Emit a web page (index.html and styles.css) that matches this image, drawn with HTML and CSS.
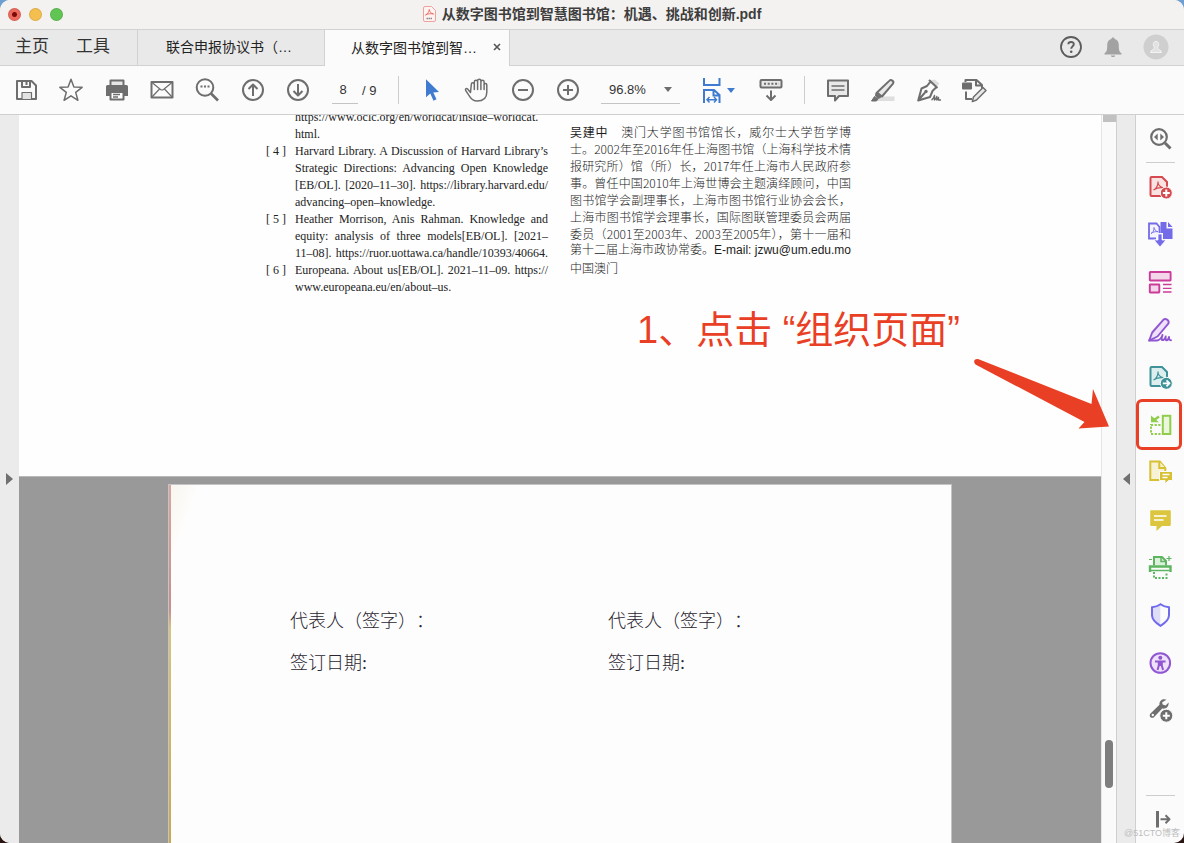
FILE: index.html
```html
<!DOCTYPE html>
<html lang="zh-CN">
<head>
<meta charset="utf-8">
<title>从数字图书馆到智慧图书馆：机遇、挑战和创新.pdf</title>
<link rel="stylesheet" href="styles.css">
</head>
<body>
<div class="window">
  <header class="titlebar">
    <div class="lights">
      <button class="light close" aria-label="关闭"></button>
      <button class="light min" aria-label="最小化"></button>
      <button class="light max" aria-label="缩放"></button>
    </div>
    <h1 class="title">
      <svg class="pdf-icon" viewBox="0 0 13 16"><path d="M2 .5h6.500l4 4V14a1.500 1.500 0 0 1-1.500 1.500H2A1.500 1.500 0 0 1 .5 14V2A1.500 1.500 0 0 1 2 .5z" fill="#fff3f1" stroke="#eda29c"/><path d="M2.500 9c2-.8 3.500-3 3.800-5.500.3 2.500 2 4.300 4.200 4.500C8 7.400 5 7.700 2.500 9z" fill="none" stroke="#e5675e" stroke-width=".9"/><path d="M3.500 12.500h6" stroke="#888" stroke-width="1.600" stroke-dasharray="1.500 .5"/></svg>
      <span>从数字图书馆到智慧图书馆：机遇、挑战和创新.pdf</span>
    </h1>
  </header>

  <nav class="tabbar">
    <div class="menus"><button class="menu">主页</button><button class="menu">工具</button></div>
    <button class="tab">联合申报协议书（…</button>
    <div class="tab active"><button class="tab-name">从数字图书馆到智…</button><button class="tab-close" aria-label="关闭标签页"><svg viewBox="0 0 8 8"><path d="M1 1l6 6M7 1L1 7" stroke="#555" stroke-width="1.600"/></svg></button></div>
    <div class="account">
      <button aria-label="帮助"><svg class="icon" viewBox="0 0 24 24"><circle cx="12" cy="12" r="10" fill="none" stroke="#5c5c5c" stroke-width="1.800"/><path d="M9.300 9.300c.2-3.200 5.600-3 5.500 0 0 2-2.600 2.200-2.600 4.500" fill="none" stroke="#5c5c5c" stroke-width="1.900"/><circle cx="12.200" cy="16.800" r="1.300" fill="#5c5c5c"/></svg></button>
      <button aria-label="通知"><svg class="icon" viewBox="0 0 24 24"><path d="M12 2.500c1 0 1.600.7 1.600 1.600 2.700.8 4.200 2.900 4.200 5.800 0 5.600.6 6.900 2.700 8.300v1.200h-17v-1.200c2.100-1.400 2.700-2.700 2.700-8.300 0-2.900 1.500-5 4.200-5.800 0-.9.600-1.600 1.600-1.600zM9.800 20.500h4.400c-.4 2-4 2-4.400 0z" fill="#a2a2a2"/></svg></button>
      <button aria-label="个人资料"><svg class="avatar" viewBox="0 0 26 26"><circle cx="13" cy="13" r="12.500" fill="#cfcfcf"/><path d="M13 7.500c2 0 3 1.400 2.700 3.300-.2 1.500-1.200 2-1.200 3.300 0 1.600 3.800 1.300 4 4.400H7.500c.2-3.100 4-2.800 4-4.400 0-1.300-1-1.800-1.200-3.300-.3-1.900.7-3.300 2.700-3.300z" fill="#e2e2e2" stroke="#f3f3f3"/></svg></button>
    </div>
  </nav>

  <div class="toolbar">
    <div class="tools seven">
      <button aria-label="保存"><svg class="icon line" viewBox="0 0 24 24"><path d="M3 3h14.500l4.500 4.500V21H3z"/><path d="M8 3v6h8V3M12.500 4v3" /><path d="M8 21v-6.500h9.500V21" fill="#e2e2e2" stroke-width="1.200"/></svg></button>
      <button aria-label="收藏"><svg class="icon line thin" viewBox="0 0 24 24"><path d="M12 1.200l2.900 7.700 8.200.4-6.400 5.100 2.200 7.900L12 17.800l-6.900 4.500 2.200-7.900L.9 9.300l8.200-.4z"/></svg></button>
      <button aria-label="打印"><svg class="icon line" viewBox="0 0 24 24"><path d="M5.500 7V2.500h13V7" fill="#e6e6e6"/><path d="M1 8.500q0-1.500 1.500-1.500h19q1.500 0 1.500 1.500V18h-5v-4H6v4H1z" fill="#6e6e6e" stroke="none"/><path d="M5.500 14h13v7.500h-13z" fill="#fff"/><path d="M8 16.500h7M8 19h5" stroke-width="1.300"/></svg></button>
      <button aria-label="电子邮件"><svg class="icon line" viewBox="0 0 24 24"><path d="M1.500 4h21v15.500h-21z"/><path d="M2 4.500l8.500 7q1.500 1 3 0l8.500-7M2 19l7.500-8M22 19l-7.500-8" stroke-width="1.200"/></svg></button>
      <button aria-label="查找"><svg class="icon line" viewBox="0 0 24 24"><circle cx="10" cy="9.500" r="8.300"/><path d="M16 15.500l7 7" stroke-width="2.600"/><path d="M5.500 8.500h2M9 8.500h2M12.500 8.500h2" stroke-width="2"/></svg></button>
      <button aria-label="上一页"><svg class="icon line" viewBox="0 0 24 24"><circle cx="12" cy="12" r="10"/><path d="M12 18V7M7.500 11L12 6.500l4.500 4.500"/></svg></button>
      <button aria-label="下一页"><svg class="icon line" viewBox="0 0 24 24"><circle cx="12" cy="12" r="10"/><path d="M12 6v11M7.500 13l4.500 4.500 4.500-4.500"/></svg></button>
    </div>
    <div class="pager"><input class="page-no" value="8" aria-label="页码"><span>/ 9</span></div>
    <span class="divider"></span>
    <div class="tools four">
      <button aria-label="选择"><svg class="icon" viewBox="0 0 24 24"><path d="M6 1.300v18l4.300-3.800 3.200 7.200 3-1.400-3.200-6.800 5.700-.6z" fill="#3f7bd0"/></svg></button>
      <button aria-label="抓手"><svg class="icon line thin" viewBox="0 0 24 24"><path d="M5.500 14.500L2.600 11C1.200 9.700-.3 11.300.9 12.800l3.900 5.800c1.700 2.800 3.800 4.400 7.200 4.400 6 0 9.800-3 9.800-8.800V7c0-2-2.700-2-2.700 0v4.500V4c0-2.200-3.200-2.200-3.200 0v7.500V2.800c0-2.200-3.300-2.200-3.300 0v8.700V4c0-2.200-3.300-2.200-3.300 0v7.500V6.500c0-2.200-3-2.200-3 0z" /></svg></button>
      <button aria-label="缩小"><svg class="icon line" viewBox="0 0 24 24"><circle cx="12" cy="12" r="10"/><path d="M7 12h10"/></svg></button>
      <button aria-label="放大"><svg class="icon line" viewBox="0 0 24 24"><circle cx="12" cy="12" r="10"/><path d="M7 12h10M12 7v10"/></svg></button>
    </div>
    <div class="zoom">
      <select aria-label="缩放比例"><option>96.8%</option></select>
      <svg class="caret" viewBox="0 0 8 5"><path d="M0 0h8L4 5z" fill="#6e6e6e"/></svg>
    </div>
    <button class="fit" aria-label="适合宽度">
      <svg class="icon fit-icon" viewBox="0 0 24 26" fill="none" stroke="#3f7bd0" stroke-width="2"><path d="M4 1v7h15.500V1"/><path d="M4 26V13h10l5.500 5V26M13.500 13v5.500h6" /><path d="M7 22.700h9.500M9.500 20L7 22.700l2.500 2.700M14 20l2.500 2.700-2.500 2.700" stroke-width="1.500"/></svg>
      <svg class="caret" viewBox="0 0 8 5"><path d="M0 0h8L4 5z" fill="#3f7bd0"/></svg>
    </button>
    <button class="keys" aria-label="隐藏工具栏"><svg class="icon line" viewBox="0 0 24 24"><rect x="1.500" y="2" width="21" height="7.500" rx="1" fill="#e8e8e8"/><path d="M5 5.700h15" stroke-dasharray="2 1.700"/><path d="M12 12.500v9M7.500 17.500l4.500 4.500 4.500-4.500"/></svg></button>
    <span class="divider"></span>
    <div class="tools four">
      <button aria-label="注释"><svg class="icon line" viewBox="0 0 24 24"><path d="M2 2.500h20v15.500h-9L9 22.500V18H2z" fill="#e8e8e8"/><path d="M5.500 8h13M5.500 12h13" stroke-width="1.300"/></svg></button>
      <button aria-label="高亮"><svg class="icon line" viewBox="0 0 24 24"><path d="M8 18.500h15.500V23H6z" fill="#dedede" stroke="none"/><path d="M6 14.500L18.500 2.600c1.500-1.500 5 .7 3.500 3L11 18.500z" fill="#e8e8e8"/><path d="M5 14.500l5 4.500-2.500 1.500-3-2.500zM3.500 18.500L7 21l-1.500 2H.5z" fill="#6e6e6e" stroke-width="1"/></svg></button>
      <button aria-label="签名"><svg class="icon line" viewBox="0 0 24 24"><path d="M13 2.500l6.500 6.500 3-3.500-5-4z" fill="#dedede" stroke="none"/><path d="M12 2l8.500 8M13.300 3.800L10 8 4.500 10.500 1.200 22.500 13 19l2.500-6 3.500-3.500M1.500 22l6.500-7.500"/><circle cx="9" cy="13.500" r="1.700" fill="#6e6e6e" stroke="none"/><path d="M14.500 22q2-1 3-4.500v4.500q1.500-.5 2.300-3.500v3.500q1-.5 1.700-2.500v2.500H24" stroke-width="1.400"/></svg></button>
      <button aria-label="编辑"><svg class="icon line" viewBox="0 0 24 24"><path d="M3.500 4V2h11L20 7v3.500M14 2v5.500h5.500"/><rect x="0" y="4.500" width="10" height="7" rx="1" fill="#6e6e6e" stroke="none"/><path d="M4 13.500V21h6"/><path d="M11.500 19L21 9.500l3 3-9.500 9.500-4.200 1.600z" fill="#e8e8e8" stroke-width="1.500"/></svg></button>
    </div>
  </div>

  <div class="body">
    <button class="left-strip" aria-label="展开导览窗格"><svg viewBox="0 0 7 12"><path d="M0 0l7 6-7 6z" fill="#707070"/></svg></button>
    <main class="document">
      <section class="page page-first">
        <div class="columns">
          <div class="refs">
            <span></span>
            <p><span>https://www.oclc.org/en/worldcat/inside–worldcat.</span><span class="end">html.</span></p>
            <span class="num">[ 4 ]</span>
            <p><span>Harvard Library. A Discussion of Harvard Library’s</span><span>Strategic Directions: Advancing Open Knowledge</span><span>[EB/OL]. [2020–11–30]. https://library.harvard.edu/</span><span class="end">advancing–open–knowledge.</span></p>
            <span class="num">[ 5 ]</span>
            <p><span>Heather Morrison, Anis Rahman. Knowledge and</span><span>equity: analysis of three models[EB/OL]. [2021–</span><span>11–08]. https://ruor.uottawa.ca/handle/10393/40664.</span></p>
            <span class="num">[ 6 ]</span>
            <p><span>Europeana. About us[EB/OL]. 2021–11–09. https://</span><span class="end">www.europeana.eu/en/about–us.</span></p>
          </div>
          <p class="bio"><span><b>吴建中</b>　澳门大学图书馆馆长，威尔士大学哲学博</span><span>士。2002年至2016年任上海图书馆（上海科学技术情</span><span>报研究所）馆（所）长，2017年任上海市人民政府参</span><span>事。曾任中国2010年上海世博会主题演绎顾问，中国</span><span>图书馆学会副理事长，上海市图书馆行业协会会长，</span><span>上海市图书馆学会理事长，国际图联管理委员会两届</span><span>委员（2001至2003年、2003至2005年），第十一届和</span><span class="mail">第十二届上海市政协常委。E-mail: jzwu@um.edu.mo</span><span class="end">中国澳门</span></p>
        </div>
      </section>
      <section class="page page-scan">
        <div class="sign"><p>代表人（签字）：</p><p>签订日期:</p></div>
        <div class="sign"><p>代表人（签字）：</p><p>签订日期:</p></div>
      </section>
    </main>
    <div class="scroll"><span class="scroll-top"></span><span class="thumb"></span></div>
    <button class="right-strip" aria-label="折叠工具窗格"><svg viewBox="0 0 7 12"><path d="M7 0L0 6l7 6z" fill="#707070"/></svg></button>
    <aside class="rail">
      <button aria-label="搜索工具"><svg class="icon line" viewBox="0 0 24 24"><circle cx="11" cy="10" r="7.800" stroke-width="2.200"/><path d="M17 16l5.500 5.500" stroke-width="3"/><path d="M9.700 6.500v7L6 10zM12.300 6.500v7L16 10z" fill="#6e6e6e" stroke="none"/></svg></button>
      <hr>
      <div class="rail-tools">
        <button aria-label="创建 PDF"><svg class="icon" viewBox="0 0 24 24" fill="none" stroke="#d6494f" stroke-width="2"><path d="M3.500 2h10.500l5 5v14H3.500q-1 0-1-1V3q0-1 1-1z" fill="#f9e2e2"/><path d="M5.500 15c3-1.500 4.500-5 4.500-8.500 0 3 2 5.500 5.500 6.300-4-.5-7 .2-10 2.200z" stroke-width="1.100"/><circle cx="18.300" cy="18" r="6" fill="#d6494f" stroke="#fafafa" stroke-width="1"/><path d="M14.800 18h7M18.300 14.500v7" stroke="#fff"/></svg></button>
        <button aria-label="合并文件"><svg class="icon" viewBox="0 0 24 24" fill="none" stroke="#736be8" stroke-width="1.800"><path d="M8 16.500H1V1.500h7.500l3 3.500v6" fill="#f5f4fd"/><path d="M3 11.500c2-1 3-3 3-6 .3 2 1.500 3.600 4 4.200-3-.3-5 .3-7 1.800z" stroke-width=".9"/><path d="M12.500 0h6v6.500h6V17H15v-6h-2.500zM20 0l4.500 5H20z" fill="#736be8" stroke="none"/><path d="M10 12h4v6h4l-6 7-6-7h4z" fill="#736be8" stroke="#fafafa" stroke-width=".8"/></svg></button>
        <button aria-label="编辑 PDF"><svg class="icon" viewBox="0 0 24 24" fill="#f3d6e9" stroke="#cb3b99" stroke-width="1.900"><rect x="1.800" y="2" width="20.800" height="8.500" rx=".5"/><rect x="1.800" y="14.500" width="9.500" height="8" rx=".5"/><path d="M15 14.500h8.500M15 18.300h8.500M15 22h8.500" stroke-width="1.300"/></svg></button>
        <button aria-label="填写和签名"><svg class="icon" viewBox="0 0 24 24" fill="none" stroke="#9157d2" stroke-width="1.900" stroke-linejoin="round" stroke-linecap="round"><path d="M1.200 22.500l3-8L15.500 1.600q1.800-1.400 3.800.2T20.500 5.300L9.500 18.500z" fill="#eee1f9"/><path d="M1.200 22.500h8q4-1 5.300-5.500-1.300 3.500-.5 5 2.200.8 3.700-3.500-.4 4 1 3.800 1.800-.3 2.300-3.300-.1 3.500 2 3.200"/></svg></button>
        <button aria-label="导出 PDF"><svg class="icon" viewBox="0 0 24 24" fill="none" stroke="#3f9299" stroke-width="2"><path d="M3.500 2h10.500l5 5v14H3.500q-1 0-1-1V3q0-1 1-1z" fill="#dceeee"/><path d="M5.500 15c3-1.500 4.500-5 4.500-8.500 0 3 2 5.500 5.500 6.300-4-.5-7 .2-10 2.200z" stroke-width="1.100"/><circle cx="18.300" cy="18.300" r="6" fill="#3f9299" stroke="#fafafa" stroke-width="1"/><path d="M14.800 18.300h6.500M18.500 15.300l3 3-3 3" stroke="#fff" stroke-width="1.700"/></svg></button>
        <button aria-label="组织页面" class="marked"><svg class="icon" viewBox="0 0 24 24" fill="none" stroke="#8fcd4b" stroke-width="2"><rect x="14.800" y="2.800" width="7.500" height="18.200" fill="#eaf7dc"/><path d="M12.500 12H3v9h9.500" stroke-dasharray="2.200 1.500"/><path d="M11 3.500L5.500 7.500" stroke-width="2.400"/><path d="M3 2.500v6.700h8z" fill="#8fcd4b" stroke="none"/></svg></button>
        <button aria-label="发送以供注释"><svg class="icon" viewBox="0 0 24 24" fill="#f7f2d4" stroke="#d8c033" stroke-width="2"><path d="M2.300 1.500h9.500l5.500 6.500v12h-15z"/><path d="M11.300 1.500V8h6"/><path d="M11.500 11.500h13v9h-4L17 24v-3.500h-5.500z" fill="#d8c033" stroke="#fafafa" stroke-width="1"/><path d="M14.500 14.500h7M14.500 17.500h5" stroke="#fff" stroke-width="1.300"/></svg></button>
        <button aria-label="注释"><svg class="icon" viewBox="0 0 24 24"><path d="M3 2.300h19q.8 0 .8.800v14q0 .8-.8.800h-8L8.500 23v-5.100H3q-.8 0-.8-.8v-14q0-.8.800-.8z" fill="#dcc63f"/><path d="M6 8h12.500M6 12h9.500" stroke="#fff" stroke-width="1.500"/></svg></button>
        <button aria-label="扫描和 OCR"><svg class="icon" viewBox="0 0 24 24" fill="none" stroke="#5eb560" stroke-width="2"><path d="M6 10.500V2h8l4 4v4.500" fill="#ddf0dc"/><path d="M13 2v4.500h5" stroke-width="1.500"/><path d="M6 17v6h12.500v-6" stroke-dasharray="2 1.500"/><path d="M2 17v-5.500h20.500V17" stroke-width="2.400"/><path d="M3 15.500h18.500" stroke-width="1.500"/><path d="M21 1v5M18.500 3.500h5M1 4.500h3" stroke-width="1.200"/></svg></button>
        <button aria-label="保护"><svg class="icon" viewBox="0 0 24 24"><path d="M12.300 2.500v20c-5-3-8-6-8-10V5c3 0 5.500-1 8-2.500z" fill="#dedcf7"/><path d="M12.500 1.300c2.500 1.800 5 2.700 8.500 3v8c0 4.500-3.500 7.500-8.500 10.500C7.500 19.800 4 16.800 4 12.300v-8c3.500-.3 6-1.200 8.500-3z" fill="none" stroke="#706aec" stroke-width="2"/></svg></button>
        <button aria-label="辅助工具"><svg class="icon" viewBox="0 0 24 24" fill="#eee1f9" stroke="#9157d2" stroke-width="2"><circle cx="12.300" cy="12" r="9.800"/><circle cx="12.300" cy="6.800" r="2" fill="#9157d2" stroke="none"/><path d="M7 10.500h10.600M10.800 11v3.500L9.500 19M13.800 11v3.500l1.300 4.500M12.300 11v4" fill="none"/></svg></button>
        <button aria-label="更多工具"><svg class="icon" viewBox="0 0 24 24"><path d="M18.500 1.800c-3-1.500-7.500.3-7 5L2.500 15.500c-2.200 2.500 1 6 3.700 3.500l8-8.500c3.800.8 6.800-2 6.400-6l-3 2.900-3-1-.4-2.200z" fill="#6e6e6e"/><circle cx="4.800" cy="17" r="1.200" fill="#fafafa"/><circle cx="18.300" cy="17.700" r="6.500" fill="#6e6e6e" stroke="#fafafa"/><path d="M14.800 17.700h7M18.300 14.200v7" stroke="#fff" stroke-width="2"/></svg></button>
      </div>
      <hr class="last-rule">
      <button aria-label="折叠"><svg class="icon line" viewBox="0 0 24 24"><path d="M9.500 4v16.500" stroke-width="3"/><path d="M12.500 12.300h9M17.500 8.300l4 4-4 4"/></svg></button>
    </aside>
    <span class="watermark">@51CTO博客</span>
  </div>

  <div class="note">1、点击 “组织页面”</div>
  <svg class="arrow" viewBox="0 0 136 76"><path d="M5 1L118.500 46 120 31l16 37.500-30.500 2 6-6.500L2.500 6.500C0 4 1 .5 5 1z" fill="#e93f25"/></svg>
</div>
</body>
</html>
```
FILE: styles.css
```css
* { box-sizing: border-box; }
body {
  margin: 0;
  background: linear-gradient(#6f9fd0 50%, #2a1512 50%);
  font-family: "Liberation Sans", "Noto Sans CJK SC", sans-serif;
  color: #333;
  text-spacing-trim: space-all;
}
button {
  border: 0;
  padding: 0;
  background: none;
  font: inherit;
  color: inherit;
  display: flex;
  align-items: center;
  justify-content: center;
}
p { margin: 0; }
svg { display: block; flex: none; overflow: visible; }
.icon { width: 24px; height: 24px; }
.line { fill: none; stroke: #6e6e6e; stroke-width: 2; stroke-linejoin: round; }
.thin { stroke-width: 1.5; }

.window {
  position: relative;
  display: flex;
  flex-direction: column;
  height: 100vh;
  border-radius: 10px;
  overflow: hidden;
  background: #fbfbfb;
}

.titlebar {
  display: grid;
  grid-template-columns: 1fr auto 1fr;
  align-items: center;
  height: 29px;
  padding-bottom: 1px;
  background: #f4f2f0;
}
.lights { display: flex; gap: 8px; padding-left: 8px; }
.light { width: 13px; height: 13px; border-radius: 50%; border: 1px solid rgba(0, 0, 0, .1); }
.close { background: radial-gradient(circle, #7a0b06 2px, #ed6a5f 3px); }
.min { background: #f5bf4f; }
.max { background: #61c554; }
.title {
  display: flex;
  align-items: center;
  gap: 6px;
  margin: 0;
  font: bold 14px/20px "Liberation Sans", "Noto Sans CJK SC", sans-serif;
  color: #3d3d3d;
}
.pdf-icon { width: 13px; height: 16px; }

.tabbar {
  display: flex;
  height: 37px;
  background: #e9e9e9;
  border-top: 1px solid #d2d2d2;
  border-bottom: 1px solid #d2d2d2;
}
.menus { display: flex; gap: 27px; width: 137px; padding: 0 0 6px 15px; font-size: 17px; }
.tab {
  width: 187px;
  padding: 0 28px 3px;
  border-left: 1px solid #d2d2d2;
  font-size: 14px;
  color: #222;
  justify-content: flex-start;
  white-space: nowrap;
}
.tab.active {
  display: flex;
  align-items: center;
  gap: 16px;
  width: 186px;
  padding: 0 8px 2px 26px;
  margin-bottom: -1px;
  background: #fbfbfb;
  border-right: 1px solid #d2d2d2;
}
.tab-close svg { width: 8px; height: 8px; }
.account { display: flex; gap: 18px; margin-left: auto; padding: 0 15px 2px 0; }
.avatar { width: 26px; height: 26px; }

.toolbar {
  display: flex;
  align-items: center;
  height: 49px;
  padding-left: 3px;
  background: #fbfbfb;
  border-bottom: 1px solid #cfcfcf;
}
.tools { display: grid; }
.seven { grid-template-columns: repeat(7, 1fr); width: 318px; }
.four { grid-template-columns: repeat(4, 1fr); width: 182px; margin-left: 10px; }
.pager {
  display: flex;
  align-items: center;
  gap: 4px;
  width: 66px;
  margin: 0 0 0 11px;
  font-size: 13px;
}
.page-no {
  width: 26px;
  height: 28px;
  padding: 0 4px 0 0;
  border: 0;
  border-bottom: 1px solid #c4c4c4;
  background: none;
  font: 13px "Liberation Sans", sans-serif;
  text-align: center;
  color: #333;
}
.divider { width: 1px; height: 28px; background: #cdcdcd; }
.zoom {
  display: flex;
  align-items: center;
  width: 79px;
  height: 28px;
  margin-left: 10px;
  border-bottom: 1px solid #c4c4c4;
}
.zoom select {
  appearance: none;
  width: 63px;
  height: 27px;
  padding: 0 0 0 8px;
  border: 0;
  background: none;
  font: 13px "Liberation Sans", sans-serif;
  color: #333;
}
.caret { width: 8px; height: 5px; }
.fit { gap: 3px; margin-left: 20px; }
.fit-icon { height: 26px; }
.keys { margin: 0 21px 0 24px; }

.body { position: relative; display: flex; flex: 1; min-height: 0; }
.left-strip { width: 19px; background: #ebebeb; }
.left-strip svg, .right-strip svg { width: 7px; height: 12px; }
.document {
  display: flex;
  flex: 1;
  flex-direction: column;
  align-items: center;
  min-width: 0;
  overflow: hidden;
  background: #999;
}
.page { background: #fefefe; }
.page-first {
  align-self: stretch;
  flex: none;
  height: 362px;
  border-bottom: 1px solid #b9b9b9;
}
.columns {
  display: grid;
  grid-template-columns: 282px 281px;
  gap: 22px;
  width: 784px;
  margin: 0 auto;
  padding-left: 98px;
  line-height: 17px;
}
.columns p span { display: block; white-space: nowrap; text-align-last: justify; }
.columns p .end { text-align-last: left; }
.refs {
  display: grid;
  grid-template-columns: 29px 253px;
  align-content: start;
  margin-top: -6px;
  font-family: "Liberation Serif", serif;
  font-size: 12px;
  color: #222;
}
.bio {
  padding-top: 8px;
  font-family: "Noto Sans CJK SC", sans-serif;
  font-size: 12px;
  font-weight: 300;
  color: #1c1c1c;
  text-spacing-trim: normal;
}
.mail { font-family: "Liberation Sans", "Noto Sans CJK SC", sans-serif; }
.page-scan {
  display: grid;
  grid-template-columns: 318px 1fr;
  align-content: start;
  flex: 1;
  width: 784px;
  margin-top: 7px;
  padding: 116px 0 0 121px;
  border: 1px solid #c4c4c4;
  border-bottom: 0;
  background:
    linear-gradient(#d9a6a0, #c98f8a 35%, #d6c47c 40%, #c7a94f) left / 2px 100% no-repeat,
    linear-gradient(110deg, #f8f5ef 0, #fdfcfa 26px, transparent 27px) left top / 90px 90px no-repeat,
    #fefdfe;
}
.sign {
  display: grid;
  gap: 2px;
  font: 300 18px/40px "Liberation Serif", "Noto Sans CJK SC", serif;
  color: #2a2630;
}
.scroll {
  display: flex;
  flex-direction: column;
  align-items: center;
  justify-content: space-between;
  width: 15px;
  padding-bottom: 55px;
  background: #fafafa;
  border-left: 1px solid #e6e6e6;
}
.scroll-top { width: 13px; height: 7px; background: #c1c1c1; }
.thumb { width: 8px; height: 48px; border-radius: 4px; background: #7e7e7e; }
.right-strip {
  width: 20px;
  background: #ebebeb;
  border: solid #cfcfcf;
  border-width: 0 1px;
}
.rail {
  display: flex;
  flex-direction: column;
  align-items: center;
  width: 48px;
  padding-top: 12px;
  padding-bottom: 12px;
}
.rail hr { width: 29px; height: 1px; margin: 11px 0 0; border: 0; background: #cdcdcd; }
.rail-tools { display: grid; grid-template-rows: repeat(12, 1fr); height: 571px; }
.rail .last-rule { margin: auto 0 11px; }
.marked { position: relative; }
.marked::after {
  content: "";
  position: absolute;
  inset: -2px -10px -2px -12px;
  border: 3px solid #e93f25;
  border-radius: 6px;
}
.watermark {
  position: absolute;
  right: 4px;
  bottom: 3px;
  font-size: 9px;
  line-height: 13px;
  color: #bdbdbd;
}
.note {
  position: absolute;
  top: 304px;
  left: 637px;
  font: 38px/52px "Liberation Sans", "Noto Sans CJK SC", sans-serif;
  color: #e93f25;
  white-space: nowrap;
}
.arrow { position: absolute; top: 358px; left: 973px; width: 136px; height: 76px; }
```
